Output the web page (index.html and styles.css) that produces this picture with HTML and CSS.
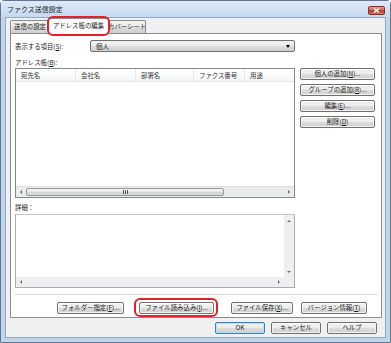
FILE: index.html
```html
<!DOCTYPE html>
<html lang="ja">

<head>
    <meta charset="UTF-8">
    <title>ファクス送信設定</title>
    <link rel="stylesheet" href="styles.css">
</head>

<body>
    <div class="window">
        <div class="titlebar">
            <span class="title">ファクス送信設定</span>
            <span class="close">
                <svg width="7" height="5" viewBox="0 0 7 5">
                    <path d="M1 0.5L6 4.5M6 0.5L1 4.5" stroke="#fff" stroke-width="1.4" />
                </svg>
            </span>
        </div>

        <div class="client">
            <div class="tabs">
                <div class="tab">送信の設定</div>
                <div class="tab selected">アドレス帳の編集</div>
                <div class="tab">カバーシート</div>
            </div>

            <div class="panel">
                <div class="show-row">
                    <span class="show-label">表示する項目(<u>S</u>):</span>
                    <div class="select">
                        <span>個人</span>
                        <span class="select-arrow"></span>
                    </div>
                </div>

                <div class="label">アドレス帳(<u>B</u>):</div>
                <div class="book">
                    <div class="list">
                        <div class="list-head">
                            <div class="col c1">宛先名</div>
                            <div class="col c2">会社名</div>
                            <div class="col c3">部署名</div>
                            <div class="col c4">ファクス番号</div>
                            <div class="col c5">用途</div>
                        </div>
                        <div class="list-body"></div>
                        <div class="hscroll">
                            <span class="arrow left"></span>
                            <div class="track">
                                <div class="thumb"><span class="grip"></span></div>
                            </div>
                            <span class="arrow right"></span>
                        </div>
                    </div>
                    <div class="side-buttons">
                        <button class="btn">個人の追加(<u>N</u>)...</button>
                        <button class="btn">グループの追加(<u>R</u>)...</button>
                        <button class="btn">編集(<u>E</u>)...</button>
                        <button class="btn">削除(<u>D</u>)</button>
                    </div>
                </div>

                <div class="label detail-label">詳細：</div>
                <div class="detail">
                    <div class="detail-main">
                        <div class="detail-text"></div>
                        <div class="vscroll">
                            <span class="arrow up"></span>
                            <span class="arrow down"></span>
                        </div>
                    </div>
                    <div class="detail-bottom">
                        <div class="hscroll-flat">
                            <span class="arrow left"></span>
                            <span class="arrow right"></span>
                        </div>
                        <div class="corner"></div>
                    </div>
                </div>

                <div class="separator"></div>

                <div class="file-buttons">
                    <button class="btn w-folder">フォルダー指定(<u>F</u>)...</button>
                    <button class="btn w-load marked">ファイル読み込み(<u>I</u>)...</button>
                    <button class="btn w-save">ファイル保存(<u>X</u>)...</button>
                    <button class="btn w-ver">バージョン情報(<u>T</u>)</button>
                </div>
            </div>

            <div class="dialog-buttons">
                <button class="btn dlg default">OK</button>
                <button class="btn dlg">キャンセル</button>
                <button class="btn dlg">ヘルプ</button>
            </div>
        </div>
    </div>
</body>

</html>
```

FILE: styles.css
```css
* {
    margin: 0;
    padding: 0;
    box-sizing: border-box;
}

body {
    width: 391px;
    height: 343px;
    overflow: hidden;
    background: #fff;
    font-family: "Noto Sans CJK JP", "Liberation Sans", sans-serif;
    font-size: 6.4px;
    color: #1a1a1a;
}

u {
    text-decoration: underline;
}

.window {
    width: 391px;
    height: 343px;
    display: flex;
    flex-direction: column;
    border: 1px solid #62768f;
    border-radius: 4px 4px 0 0;
    background: #c1d5ed;
}

.titlebar {
    height: 16px;
    display: flex;
    align-items: center;
    justify-content: space-between;
    padding: 0 5px 0 6px;
    background: linear-gradient(#dde9f7, #c6d9ef);
}

.title {
    font-size: 7px;
    color: #1d1d1d;
}

.close {
    width: 17px;
    height: 9px;
    margin-top: 3px;
    border: 1px solid #7e3128;
    border-radius: 2px;
    background: linear-gradient(#e2a396, #cd5a4c 48%, #bb3325 52%, #d47a6b);
    display: flex;
    align-items: center;
    justify-content: center;
}

.client {
    flex: 1;
    margin: 0 4px 4px 4px;
    background: #f0f0f0;
    border: 1px solid #92a8c4;
    padding: 0 3px 0 4px;
    display: flex;
    flex-direction: column;
}

/* tabs */

.tabs {
    height: 15px;
    display: flex;
    align-items: flex-end;
}

.tab {
    height: 13px;
    line-height: 12px;
    text-align: center;
    white-space: nowrap;
    overflow: hidden;
    border: 1px solid #898c95;
    border-bottom: none;
    border-radius: 2px 2px 0 0;
    background: linear-gradient(#f2f2f2, #ebebeb 50%, #dddddd 51%, #cfcfcf);
}

.tab:first-child {
    width: 40px;
}

.tab:last-child {
    width: 39px;
}

.tab.selected {
    position: relative;
    z-index: 2;
    width: 61px;
    height: 16px;
    line-height: 14px;
    margin: 0 -2px -1px -2px;
    background: #fff;
    overflow: visible;
}

.tab.selected::after {
    content: "";
    position: absolute;
    top: -3px;
    left: -2px;
    right: -2px;
    bottom: -2px;
    border: 2px solid #e42128;
    border-radius: 6px;
}

/* panel */

.panel {
    height: 285px;
    background: #fff;
    border: 1px solid #898c95;
    padding: 6px 4px 0 4px;
    display: flex;
    flex-direction: column;
}

.show-row {
    display: flex;
    align-items: center;
    height: 12px;
}

.show-label {
    width: 75px;
}

.select {
    width: 205px;
    height: 12px;
    border: 1px solid #707070;
    border-radius: 2px;
    background: linear-gradient(#f2f2f2, #ebebeb 50%, #dddddd 51%, #cfcfcf);
    display: flex;
    align-items: center;
    justify-content: space-between;
    padding: 0 4px 0 5px;
}

.select-arrow {
    width: 0;
    height: 0;
    border-left: 2.5px solid transparent;
    border-right: 2.5px solid transparent;
    border-top: 3px solid #000;
}

.label {
    margin-top: 5px;
    line-height: 11px;
}

.book {
    display: flex;
    gap: 5px;
    height: 130px;
}

.list {
    width: 280px;
    border: 1px solid #828790;
    display: flex;
    flex-direction: column;
}

.list-head {
    height: 13px;
    display: flex;
    background: linear-gradient(#ffffff, #fbfbfb 60%, #f2f3f5);
    border-bottom: 1px solid #e5e5e5;
}

.col {
    line-height: 13px;
    padding-left: 5px;
    color: #333;
    border-right: 1px solid #e3e8ee;
    white-space: nowrap;
    overflow: hidden;
}

.c1 { width: 60px; }
.c2 { width: 60px; }
.c3 { width: 58px; }
.c4 { width: 51px; }
.c5 { flex: 1; border-right: none; }

.list-body {
    flex: 1;
}

.hscroll {
    height: 11px;
    background: #ebebeb;
    border-top: 1px solid #e0e0e0;
    display: flex;
    align-items: center;
}

.hscroll .track {
    flex: 1;
    height: 100%;
    padding: 1px 0;
}

.thumb {
    width: 198px;
    height: 100%;
    border: 1px solid #979797;
    border-radius: 2px;
    background: linear-gradient(#f4f4f4, #e6e6e6 50%, #d6d6d6 51%, #dcdcdc);
    display: flex;
    align-items: center;
    justify-content: center;
}

.grip {
    width: 5px;
    height: 4px;
    background: repeating-linear-gradient(90deg, #555 0 1px, transparent 1px 2px);
}

.arrow {
    width: 0;
    height: 0;
    flex: none;
}

.arrow.left {
    margin: 0 4px 0 4px;
    border-top: 2px solid transparent;
    border-bottom: 2px solid transparent;
    border-right: 2px solid #6b6b6b;
}

.arrow.right {
    margin: 0 4px 0 4px;
    border-top: 2px solid transparent;
    border-bottom: 2px solid transparent;
    border-left: 2px solid #6b6b6b;
}

.arrow.up {
    border-left: 2px solid transparent;
    border-right: 2px solid transparent;
    border-bottom: 2px solid #6b6b6b;
}

.arrow.down {
    border-left: 2px solid transparent;
    border-right: 2px solid transparent;
    border-top: 2px solid #6b6b6b;
}

.side-buttons {
    width: 75px;
    display: flex;
    flex-direction: column;
    gap: 4px;
}

.btn {
    font: inherit;
    height: 12px;
    line-height: 10px;
    color: #1a1a1a;
    white-space: nowrap;
    border: 1px solid #707070;
    border-radius: 2px;
    background: linear-gradient(#f2f2f2, #ebebeb 50%, #dddddd 51%, #cfcfcf);
    box-shadow: inset 0 0 0 1px rgba(255, 255, 255, 0.7);
}

.detail-label {
    margin-top: 4px;
    line-height: 12px;
}

.detail {
    width: 280px;
    height: 74px;
    border: 1px solid #abadb3;
    border-top-color: #c3c5c9;
    display: flex;
    flex-direction: column;
}

.detail-main {
    flex: 1;
    display: flex;
}

.detail-text {
    flex: 1;
}

.vscroll {
    width: 10px;
    background: #efefef;
    display: flex;
    flex-direction: column;
    align-items: center;
    justify-content: space-between;
    padding: 5px 0 4px;
}

.detail-bottom {
    height: 10px;
    display: flex;
}

.hscroll-flat {
    flex: 1;
    background: #efefef;
    display: flex;
    align-items: center;
    justify-content: space-between;
}

.corner {
    width: 10px;
    background: #efefef;
}

.separator {
    margin-top: 6px;
    height: 1px;
    background: #d6d6d6;
}

.file-buttons {
    margin-top: 7px;
    display: flex;
    justify-content: flex-end;
    padding-right: 10px;
}

.w-folder { width: 67px; }
.w-load { width: 75px; margin-left: 15px; }
.w-save { width: 62px; margin-left: 17px; }
.w-ver { width: 66px; margin-left: 8px; }

.marked {
    position: relative;
}

.marked::after {
    content: "";
    position: absolute;
    top: -5px;
    left: -6px;
    right: -5px;
    bottom: -4px;
    border: 2px solid #e42128;
    border-radius: 6px;
}

.dialog-buttons {
    margin-top: 4px;
    display: flex;
    justify-content: flex-end;
    gap: 6px;
    padding-right: 5px;
}

.dlg {
    width: 50px;
}

.dlg.default {
    border-color: #3c7fb1;
    box-shadow: inset 0 0 0 1px #b7e0f8;
}
```
